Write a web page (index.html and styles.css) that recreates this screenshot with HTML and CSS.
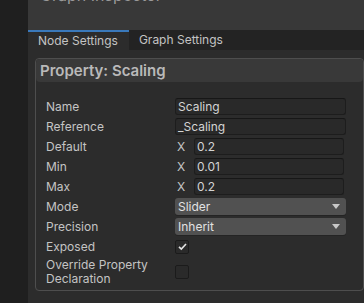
FILE: index.html
```html
<!DOCTYPE html>
<html lang="en">
<head>
<meta charset="UTF-8" />
<title>Graph Inspector</title>
<link rel="stylesheet" href="styles.css">
</head>
<body>
<div class="side"></div>
<div class="panel">
    <div class="panel-head">
        <div class="panel-title">Graph Inspector</div>
    </div>
    <div class="tabs">
        <div class="tab active">Node Settings</div>
        <div class="tab">Graph Settings</div>
    </div>
    <div class="content">
        <div class="card">
            <div class="card-head">Property: Scaling</div>
            <div class="rows">
                <div class="label">Name</div>
                <div class="field">Scaling</div>

                <div class="label">Reference</div>
                <div class="field">_Scaling</div>

                <div class="label">Default</div>
                <div class="vec"><span class="axis">X</span><div class="field">0.2</div></div>

                <div class="label">Min</div>
                <div class="vec"><span class="axis">X</span><div class="field">0.01</div></div>

                <div class="label">Max</div>
                <div class="vec"><span class="axis">X</span><div class="field">0.2</div></div>

                <div class="label">Mode</div>
                <div class="dropdown">Slider<span class="arrow"></span></div>

                <div class="label">Precision</div>
                <div class="dropdown">Inherit<span class="arrow"></span></div>

                <div class="label">Exposed</div>
                <div class="check-cell">
                    <div class="check">
                        <svg width="11" height="11" viewBox="0 0 11 11"><path d="M2 5.8 L4.3 8 L9 3" fill="none" stroke="#e4e4e4" stroke-width="1.6"/></svg>
                    </div>
                </div>

                <div class="label two">Override Property<br>Declaration</div>
                <div class="check-cell"><div class="check"></div></div>
            </div>
        </div>
    </div>
</div>
</body>
</html>
```
FILE: styles.css
```css
body {
    margin: 0;
    background: #1f1f1f;
    font-family: Inter, "Noto Sans", sans-serif;
    font-size: 12px;
    display: flex;
    height: 303px;
    overflow: hidden;
}
.side {
    width: 28px;
    background: #1f1f1f;
}
.panel {
    flex: 1;
    display: flex;
    flex-direction: column;
    background: #2c2c2c;
}
.panel-head {
    height: 30px;
    background: #383838;
    overflow: hidden;
}
.panel-title {
    margin-top: -15px;
    padding-left: 12px;
    font-size: 16px;
    color: #9a9a9a;
}
.tabs {
    display: flex;
    height: 20px;
    background: #232323;
}
.tab {
    padding: 0 10px;
    line-height: 20px;
    font-size: 12px;
    color: #c4c4c4;
}
.tab.active {
    background: #2c2c2c;
    border-top: 2px solid #3a79bb;
    line-height: 18px;
    padding-right: 11px;
}
.content {
    flex: 1;
    padding: 8px 0 0 7px;
}
.card {
    border: 1px solid #4e4e4e;
    border-radius: 4px;
    padding-bottom: 4px;
}
.card-head {
    height: 23px;
    line-height: 23px;
    background: #393939;
    border-radius: 4px;
    padding-left: 4px;
    font-size: 15px;
    font-weight: 600;
    color: #b9b9b9;
}
.rows {
    display: grid;
    grid-template-columns: 129px 171px;
    grid-auto-rows: minmax(17px, auto);
    row-gap: 3px;
    padding: 16px 0 0 10px;
    align-items: center;
}
.label {
    color: #c4c4c4;
    line-height: 17px;
}
.label.two {
    line-height: 14px;
}
.field {
    height: 15px;
    line-height: 15px;
    background: #292929;
    border: 1px solid #1d1d1d;
    border-top-color: #171717;
    border-radius: 3px;
    padding-left: 2px;
    color: #d4d4d4;
}
.vec {
    display: flex;
    align-items: center;
}
.vec .field {
    flex: 1;
    margin-right: 2px;
}
.axis {
    width: 17px;
    padding-left: 2px;
    color: #c4c4c4;
}
.dropdown {
    position: relative;
    height: 17px;
    line-height: 17px;
    background: #515151;
    border-radius: 3px;
    padding-left: 3px;
    color: #e2e2e2;
    box-shadow: 0 1px 0 #242424;
}
.arrow {
    position: absolute;
    right: 6px;
    top: 6px;
    border-left: 4px solid transparent;
    border-right: 4px solid transparent;
    border-top: 5px solid #c8c8c8;
}
.check-cell {
    height: 17px;
    display: flex;
    align-items: center;
}
.check {
    width: 12px;
    height: 12px;
    background: #2a2a2a;
    border: 1px solid #1b1b1b;
    border-radius: 2px;
    display: flex;
    align-items: center;
    justify-content: center;
}
```
